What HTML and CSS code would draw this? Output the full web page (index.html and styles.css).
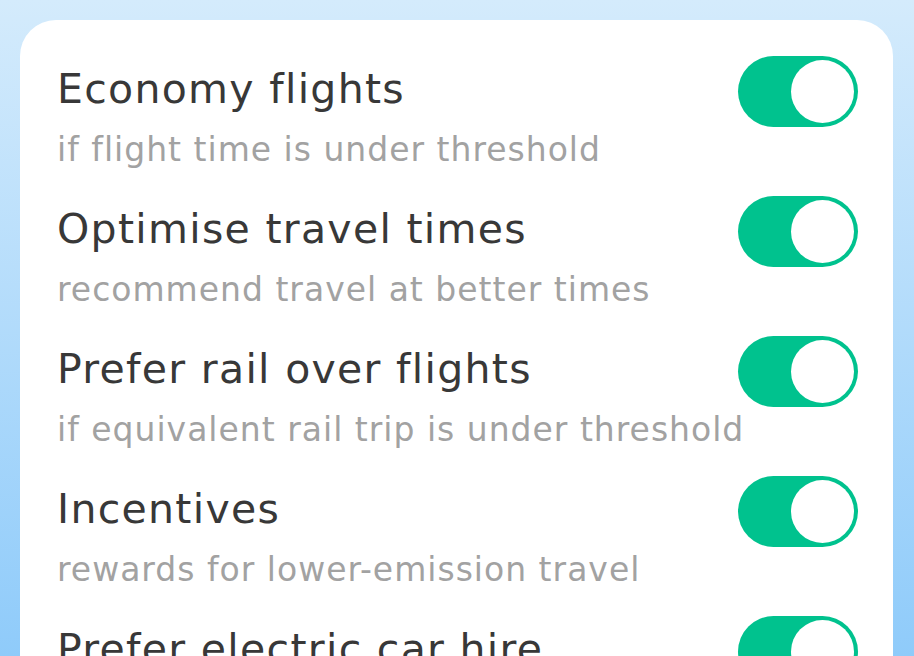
FILE: index.html
```html
<!DOCTYPE html>
<html lang="en">
<head>
    <meta charset="UTF-8">
    <meta name="viewport" content="width=device-width, initial-scale=1.0">
    <title>Travel Preferences</title>
    <link rel="stylesheet" href="styles.css">
</head>
<body>
    <div class="card">
        <div class="pref-row">
            <div class="pref-text">
                <div class="pref-title">Economy flights</div>
                <div class="pref-sub">if flight time is under threshold</div>
            </div>
            <div class="toggle on"><span class="knob"></span></div>
        </div>
        <div class="pref-row">
            <div class="pref-text">
                <div class="pref-title">Optimise travel times</div>
                <div class="pref-sub">recommend travel at better times</div>
            </div>
            <div class="toggle on"><span class="knob"></span></div>
        </div>
        <div class="pref-row">
            <div class="pref-text">
                <div class="pref-title">Prefer rail over flights</div>
                <div class="pref-sub">if equivalent rail trip is under threshold</div>
            </div>
            <div class="toggle on"><span class="knob"></span></div>
        </div>
        <div class="pref-row">
            <div class="pref-text">
                <div class="pref-title">Incentives</div>
                <div class="pref-sub">rewards for lower-emission travel</div>
            </div>
            <div class="toggle on"><span class="knob"></span></div>
        </div>
        <div class="pref-row">
            <div class="pref-text">
                <div class="pref-title">Prefer electric car hire</div>
                <div class="pref-sub">when an electric option is available</div>
            </div>
            <div class="toggle on"><span class="knob"></span></div>
        </div>
    </div>
</body>
</html>
```

FILE: styles.css
```css
html, body {
    height: 100%;
}
body {
    margin: 0;
    padding: 20px 21px 0 20px;
    box-sizing: border-box;
    overflow: hidden;
    font-family: "DejaVu Sans", "Open Sans", sans-serif;
    background: linear-gradient(to bottom, #d4ebfc, #8fcbfa);
}
.card {
    background-color: white;
    border-radius: 36px 36px 0 0;
    padding: 36px 35px 0 37px;
    min-height: 800px;
}
.pref-row {
    display: flex;
    justify-content: space-between;
    align-items: flex-start;
    height: 140px;
}
.pref-text {
    min-width: 0;
    white-space: nowrap;
}
.pref-title {
    font-size: 41px;
    line-height: 67px;
    letter-spacing: 1.3px;
    color: #383838;
}
.pref-sub {
    font-size: 33px;
    line-height: 54px;
    letter-spacing: 1px;
    color: #a2a2a2;
}
.toggle {
    width: 120px;
    height: 71px;
    border-radius: 36px;
    background-color: #e0e0e0;
    box-sizing: border-box;
    padding: 4px;
    display: flex;
    flex-shrink: 0;
}
.toggle.on {
    background-color: #00c28e;
    justify-content: flex-end;
}
.knob {
    width: 63px;
    height: 63px;
    border-radius: 50%;
    background-color: white;
}
```
